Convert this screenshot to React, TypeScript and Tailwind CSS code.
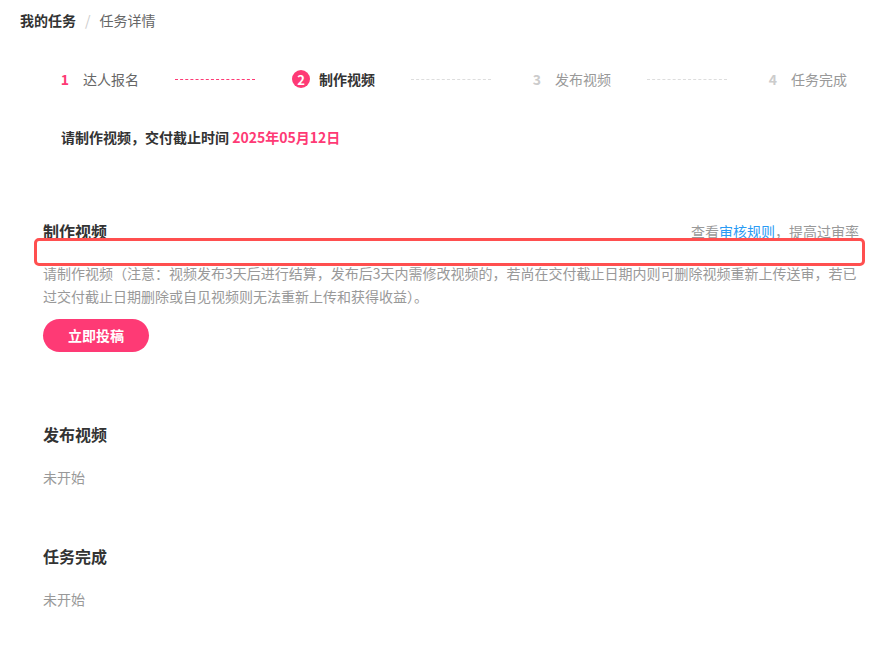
import React from "react";

const PINK = "text-[#fe3a75]";

function Step({
  num,
  label,
  state,
}: {
  num: string;
  label: string;
  state: "done" | "active" | "todo";
}) {
  return (
    <div className="flex items-center gap-[9px] shrink-0">
      <div className="w-[18px] h-[18px] flex items-center justify-center">
        {state === "active" ? (
          <div className="w-[18px] h-[18px] rounded-full bg-[#fe3a75] text-white text-[13px] font-bold leading-none flex items-center justify-center">
            {num}
          </div>
        ) : (
          <span
            className={
              "text-[14px] font-bold leading-none " +
              (state === "done" ? "text-[#fe3a75]" : "text-[#cccccc]")
            }
          >
            {num}
          </span>
        )}
      </div>
      <span
        className={
          "text-[14px] leading-5 " +
          (state === "active"
            ? "font-semibold text-[#333333]"
            : state === "done"
            ? "text-[#666666]"
            : "text-[#999999]")
        }
      >
        {label}
      </span>
    </div>
  );
}

function Line({ active }: { active?: boolean }) {
  return (
    <div
      className={
        "w-20 ml-9 mr-[37px] h-0 border-t border-dashed shrink-0 " +
        (active ? "border-[#fe3a75]" : "border-[#dddddd]")
      }
    />
  );
}

export default function App() {
  return (
    <div
      className="w-[896px] h-[670px] bg-white overflow-hidden"
      style={{ fontFamily: '"Noto Sans CJK SC", "Noto Sans", sans-serif' }}
    >
      {/* breadcrumb */}
      <div className="pt-[10px] pl-5 flex items-center text-[14px] leading-5">
        <span className="font-semibold text-[#333333]">我的任务</span>
        <span className="mx-[9px] text-[#cccccc]">/</span>
        <span className="text-[#666666]">任务详情</span>
      </div>

      {/* steps */}
      <div className="mt-[39px] pl-[56px] flex items-center h-5">
        <Step num="1" label="达人报名" state="done" />
        <Line active />
        <Step num="2" label="制作视频" state="active" />
        <Line />
        <Step num="3" label="发布视频" state="todo" />
        <Line />
        <Step num="4" label="任务完成" state="todo" />
      </div>

      {/* deadline */}
      <div className="mt-[38px] pl-[61px] text-[14px] leading-5 font-semibold text-[#333333]">
        请制作视频，交付截止时间{" "}
        <span className={PINK}>2025年05月12日</span>
      </div>

      {/* section 1 */}
      <div className="mt-[72px] pl-[43px] w-[859px] relative">
        <div className="flex items-center justify-between h-6">
          <span className="text-[16px] font-semibold text-[#333333]">制作视频</span>
          <span className="text-[14px] text-[#999999]">
            查看<span className="text-[#2a9bf4]">审核规则</span>，提高过审率
          </span>
        </div>
        <div className="absolute left-[34px] top-[19px] w-[831px] h-[28px] border-[3px] border-[#ff4f4f] rounded-[5px]" />
        <p className="mt-[19px] text-[14px] leading-[23px] text-[#999999]">
          请制作视频（注意：视频发布3天后进行结算，发布后3天内需修改视频的，若尚在交付截止日期内则可删除视频重新上传送审，若已过交付截止日期删除或自见视频则无法重新上传和获得收益）。
        </p>
        <button className="mt-[11px] w-[106px] h-[33px] rounded-full bg-[#fe3a75] text-white text-[14px] font-semibold">
          立即投稿
        </button>
      </div>

      {/* section 2 */}
      <div className="mt-[70px] pl-[43px]">
        <div className="text-[16px] leading-6 font-semibold text-[#333333]">发布视频</div>
        <div className="mt-[21px] text-[14px] leading-5 text-[#999999]">未开始</div>
      </div>

      {/* section 3 */}
      <div className="mt-[57px] pl-[43px]">
        <div className="text-[16px] leading-6 font-semibold text-[#333333]">任务完成</div>
        <div className="mt-[21px] text-[14px] leading-5 text-[#999999]">未开始</div>
      </div>
    </div>
  );
}
